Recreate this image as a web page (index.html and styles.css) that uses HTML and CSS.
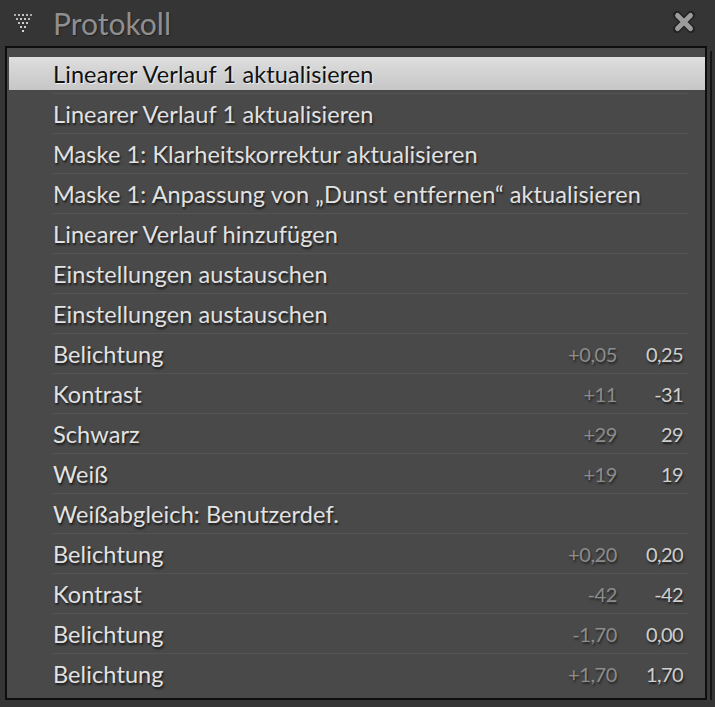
FILE: index.html
```html
<!DOCTYPE html>
<html>
    <head>
        <meta charset="utf-8">
        <link rel="stylesheet" href="styles.css">
    </head>

    <body>
        <div class="header">
            <svg class="toggle" width="20" height="20" viewBox="0 0 20 20">
                <rect x="0" y="0" width="2" height="2" fill="#aaa"/>
                <rect x="4" y="0" width="2" height="2" fill="#bbb"/>
                <rect x="8" y="0" width="2" height="2" fill="#c4c4c4"/>
                <rect x="12" y="0" width="2" height="2" fill="#bbb"/>
                <rect x="16" y="0" width="2" height="2" fill="#aaa"/>
                <rect x="2" y="4" width="2" height="2" fill="#bbb"/>
                <rect x="6" y="4" width="2" height="2" fill="#c8c8c8"/>
                <rect x="10" y="4" width="2" height="2" fill="#c8c8c8"/>
                <rect x="14" y="4" width="2" height="2" fill="#bbb"/>
                <rect x="4" y="8" width="2" height="2" fill="#c4c4c4"/>
                <rect x="8" y="8" width="2" height="2" fill="#d0d0d0"/>
                <rect x="12" y="8" width="2" height="2" fill="#c4c4c4"/>
                <rect x="6" y="12" width="2" height="2" fill="#ccc"/>
                <rect x="10" y="12" width="2" height="2" fill="#ccc"/>
                <rect x="8" y="16" width="2" height="2" fill="#d4d4d4"/>
            </svg>
            <span class="title">Protokoll</span>
            <svg class="close" width="22" height="22" viewBox="0 0 22 22">
                <path d="M4 4 L18 18 M18 4 L4 18" stroke="#222" stroke-width="8" stroke-linecap="round"/>
                <path d="M4.5 4.5 L17.5 17.5 M17.5 4.5 L4.5 17.5" stroke="#9c9c9c" stroke-width="5" stroke-linecap="round"/>
            </svg>
        </div>

        <div class="panel">
            <div class="list">
                <div class="row active"><div class="cell"><span class="label">Linearer Verlauf 1 aktualisieren</span></div></div>
                <div class="row"><div class="cell"><span class="label">Linearer Verlauf 1 aktualisieren</span></div></div>
                <div class="row"><div class="cell"><span class="label">Maske 1: Klarheitskorrektur aktualisieren</span></div></div>
                <div class="row"><div class="cell"><span class="label">Maske 1: Anpassung von „Dunst entfernen“ aktualisieren</span></div></div>
                <div class="row"><div class="cell"><span class="label">Linearer Verlauf hinzufügen</span></div></div>
                <div class="row"><div class="cell"><span class="label">Einstellungen austauschen</span></div></div>
                <div class="row"><div class="cell"><span class="label">Einstellungen austauschen</span></div></div>
                <div class="row"><div class="cell"><span class="label">Belichtung</span><span class="delta">+0,05</span><span class="value">0,25</span></div></div>
                <div class="row"><div class="cell"><span class="label">Kontrast</span><span class="delta">+11</span><span class="value">-31</span></div></div>
                <div class="row"><div class="cell"><span class="label">Schwarz</span><span class="delta">+29</span><span class="value">29</span></div></div>
                <div class="row"><div class="cell"><span class="label">Weiß</span><span class="delta">+19</span><span class="value">19</span></div></div>
                <div class="row"><div class="cell"><span class="label">Weißabgleich: Benutzerdef.</span></div></div>
                <div class="row"><div class="cell"><span class="label">Belichtung</span><span class="delta">+0,20</span><span class="value">0,20</span></div></div>
                <div class="row"><div class="cell"><span class="label">Kontrast</span><span class="delta">-42</span><span class="value">-42</span></div></div>
                <div class="row"><div class="cell"><span class="label">Belichtung</span><span class="delta">-1,70</span><span class="value">0,00</span></div></div>
                <div class="row last"><div class="cell"><span class="label">Belichtung</span><span class="delta">+1,70</span><span class="value">1,70</span></div></div>
            </div>
        </div>
    </body>
</html>
```

FILE: styles.css
```css
* {
    box-sizing: border-box;
}

body {
    margin: 0;
    padding: 0;
    background-color: #353535;
    font-family: Lato, "Liberation Sans", sans-serif;
    overflow: hidden;
}

.header {
    height: 46px;
    display: flex;
    align-items: center;
    padding-left: 14px;
    padding-right: 20px;
}

.toggle {
    margin-top: 2px;
}

.title {
    margin-left: 19px;
    font-size: 30px;
    color: #8f8f8f;
    text-shadow: 1px 1px 1px #222;
    flex: 1;
}

.close {
    margin-top: -3px;
}

.panel {
    margin-left: 5px;
    width: 702px;
    height: 654px;
    background-color: #494949;
    border: 2px solid #0e0e0e;
    box-shadow: 3px 3px 0 #3a3a3a, 5px 5px 0 #151515;
}

.list {
    padding: 6px 0 0 2px;
}

.row {
    height: 40px;
}

.row.active {
    background: linear-gradient(#dedede, #c6c6c6) 0 3px / 100% 33px no-repeat;
}

.cell {
    margin-left: 44px;
    margin-right: 17px;
    height: 40px;
    border-bottom: 1px solid #545454;
    display: flex;
    align-items: center;
    font-size: 23.5px;
    letter-spacing: 0.1px;
    padding-right: 5px;
}

.row.last .cell {
    border-bottom: none;
}

.label {
    flex: 1;
    color: #e2e2e2;
    text-shadow: 1px 2px 2px #1c1c1c;
}

.row.active .label {
    color: #111;
    text-shadow: 1px 1px 1px #f2f2f2;
}

.delta {
    color: #8c8c8c;
    font-size: 20px;
    letter-spacing: -0.4px;
    text-shadow: 1px 2px 2px #262626;
}

.value {
    width: 66px;
    text-align: right;
    color: #cfcfcf;
    font-size: 20px;
    letter-spacing: -0.6px;
    text-shadow: 1px 2px 2px #1c1c1c;
}
```
